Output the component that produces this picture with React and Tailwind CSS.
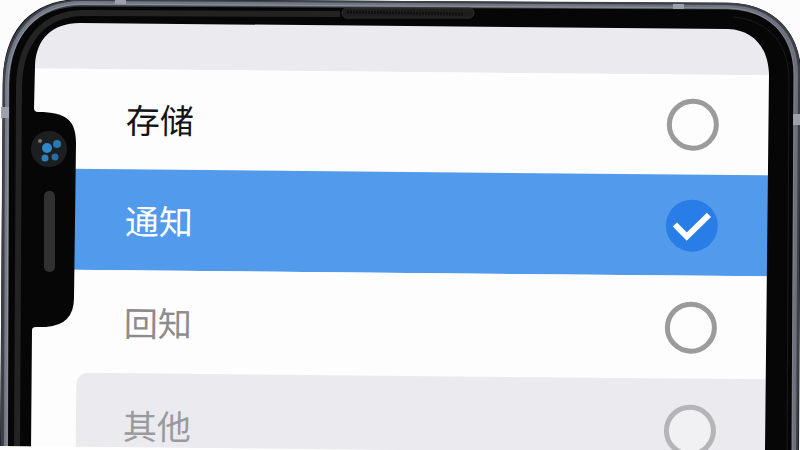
import React from 'react';

const options = [
  { id: 'storage', label: '存储', row: 'ml-18 pl-[55px] h-[100px] bg-[#fdfdfd]', text: 'text-[#141414]', ring: 'border-[#9b9b9b] bg-[#fdfdfd]' },
  { id: 'notice', label: '通知', row: 'ml-18 pl-[55px] h-[101px] bg-[#519aec]', text: 'text-white', ring: 'border-[#9b9b9b]', selected: true },
  { id: 'reply', label: '回知', row: 'ml-18 pl-[55px] h-[103px] bg-[#fdfdfd]', text: 'text-[#8c8c8c]', ring: 'border-[#9b9b9b] bg-[#fdfdfd]' },
  { id: 'other', label: '其他', row: 'ml-20 pl-[47px] h-[104px] rounded-tl-xl bg-[#ebebef]', text: 'text-[#9a9a9c]', ring: 'border-[#b5b5b7] bg-[#f1f1f4]' },
];

function Option({ option }) {
  return (
    <label className={`flex items-center justify-between pr-20 ${option.row}`}>
      <span className={`text-[34px] leading-10 ${option.text}`}>{option.label}</span>
      <span className="relative grid size-[52px] place-items-center">
        <input
          type="radio"
          name="category"
          value={option.id}
          defaultChecked={option.selected}
          className={`peer size-[52px] appearance-none rounded-full border-[5px] checked:border-0 checked:bg-[#287de6] ${option.ring}`}
        />
        <svg
          viewBox="0 0 52 52"
          className="pointer-events-none absolute inset-0 hidden size-[52px] peer-checked:block"
          fill="none"
          stroke="#fbfdff"
          strokeWidth="6"
          aria-hidden="true"
        >
          <path d="M9 25 21 37 43 15" />
        </svg>
      </span>
    </label>
  );
}

function PhoneFrame() {
  return (
    <svg viewBox="0 0 800 450" className="pointer-events-none absolute inset-x-0 top-0 w-full" aria-hidden="true">
      <defs>
        <linearGradient id="metal" x1="0" x2="1" y1="0" y2="0">
          <stop offset="0" stopColor="#757b86" />
          <stop offset="1" stopColor="#6c717c" />
        </linearGradient>
      </defs>
      <path
        fill="#fcfcfc"
        fillRule="evenodd"
        d="M0 0H800V450H0ZM1 450 3 82C4 30 33 0 82 0L728 3C772 4 799 31 799 72L798 450Z"
      />
      <path
        fill="#060607"
        fillRule="evenodd"
        d="M0 450 3 80C4 28 33-1 82-1L730 3C773 4 801 32 801 74L799 450ZM31 450 32 330Q32 327 36 327H46Q74 325 74 298L76 143C76 121 67 112 38 112Q34 112 34 108L35 66C36 39 52 23 80 23L728 29C753 30 768 47 769 74L765 450Z"
      />
      <path d="M4 450 6 84C7 31 36 3 82 3L728 6C772 7 797 34 797 75L795 450" fill="none" stroke="#3d4048" strokeWidth="7" />
      <path d="M6 450 7 84C8 33 37 3 82 3L728 7C771 8 796 35 796 75L794 450" fill="none" stroke="url(#metal)" strokeWidth="4" />
      <path d="M7 450 8 84C9 35 38 4 82 4L728 8C769 9 794 36 794 75L792 450" fill="none" stroke="#a4abba" strokeOpacity=".5" strokeWidth="1" />
      <path d="M17 450 19 86C20 42 43 13 84 13L340 14" fill="none" stroke="#232323" strokeWidth="6" />
      <path d="M787 450 789 80C789 48 772 20 733 17" fill="none" stroke="#1b1b1d" strokeWidth="1" />
      <path fill="#9ca1ac" d="M115 0h11v4h-11ZM673 4h11v5h-11ZM1 107h8v11H1ZM793 114h7v11h-7Z" />
      <rect x="342" y="8" width="132" height="10" rx="5" fill="#1e1e1f" stroke="#303031" />
      <path d="M347 12 463 14" stroke="#101010" strokeWidth="3" strokeDasharray="2 1" />
      <circle cx="49" cy="149" r="18" fill="#1c1f22" />
      <circle cx="47" cy="148" r="5" fill="#2d89cc" />
      <circle cx="57" cy="144" r="4" fill="#2878b2" />
      <circle cx="45" cy="158" r="3.5" fill="#2b7fbd" />
      <circle cx="55" cy="157" r="3.5" fill="#286d9f" />
      <circle cx="40" cy="141" r="2" fill="#846f62" />
      <rect x="44" y="191" width="11" height="81" rx="5" fill="#303031" />
      <path d="M0 446 400 450H0Z" fill="#fff" />
    </svg>
  );
}

export default function App() {
  return (
    <main className="relative h-screen w-full overflow-hidden bg-[#fdfdfd] font-['Noto_Sans_CJK_SC',sans-serif]">
      <fieldset className="origin-top-left rotate-[0.55deg]" aria-label="选项">
        <div className="h-[68px] bg-[#ebebef]" />
        {options.map((option) => (
          <Option key={option.id} option={option} />
        ))}
      </fieldset>
      <PhoneFrame />
    </main>
  );
}
